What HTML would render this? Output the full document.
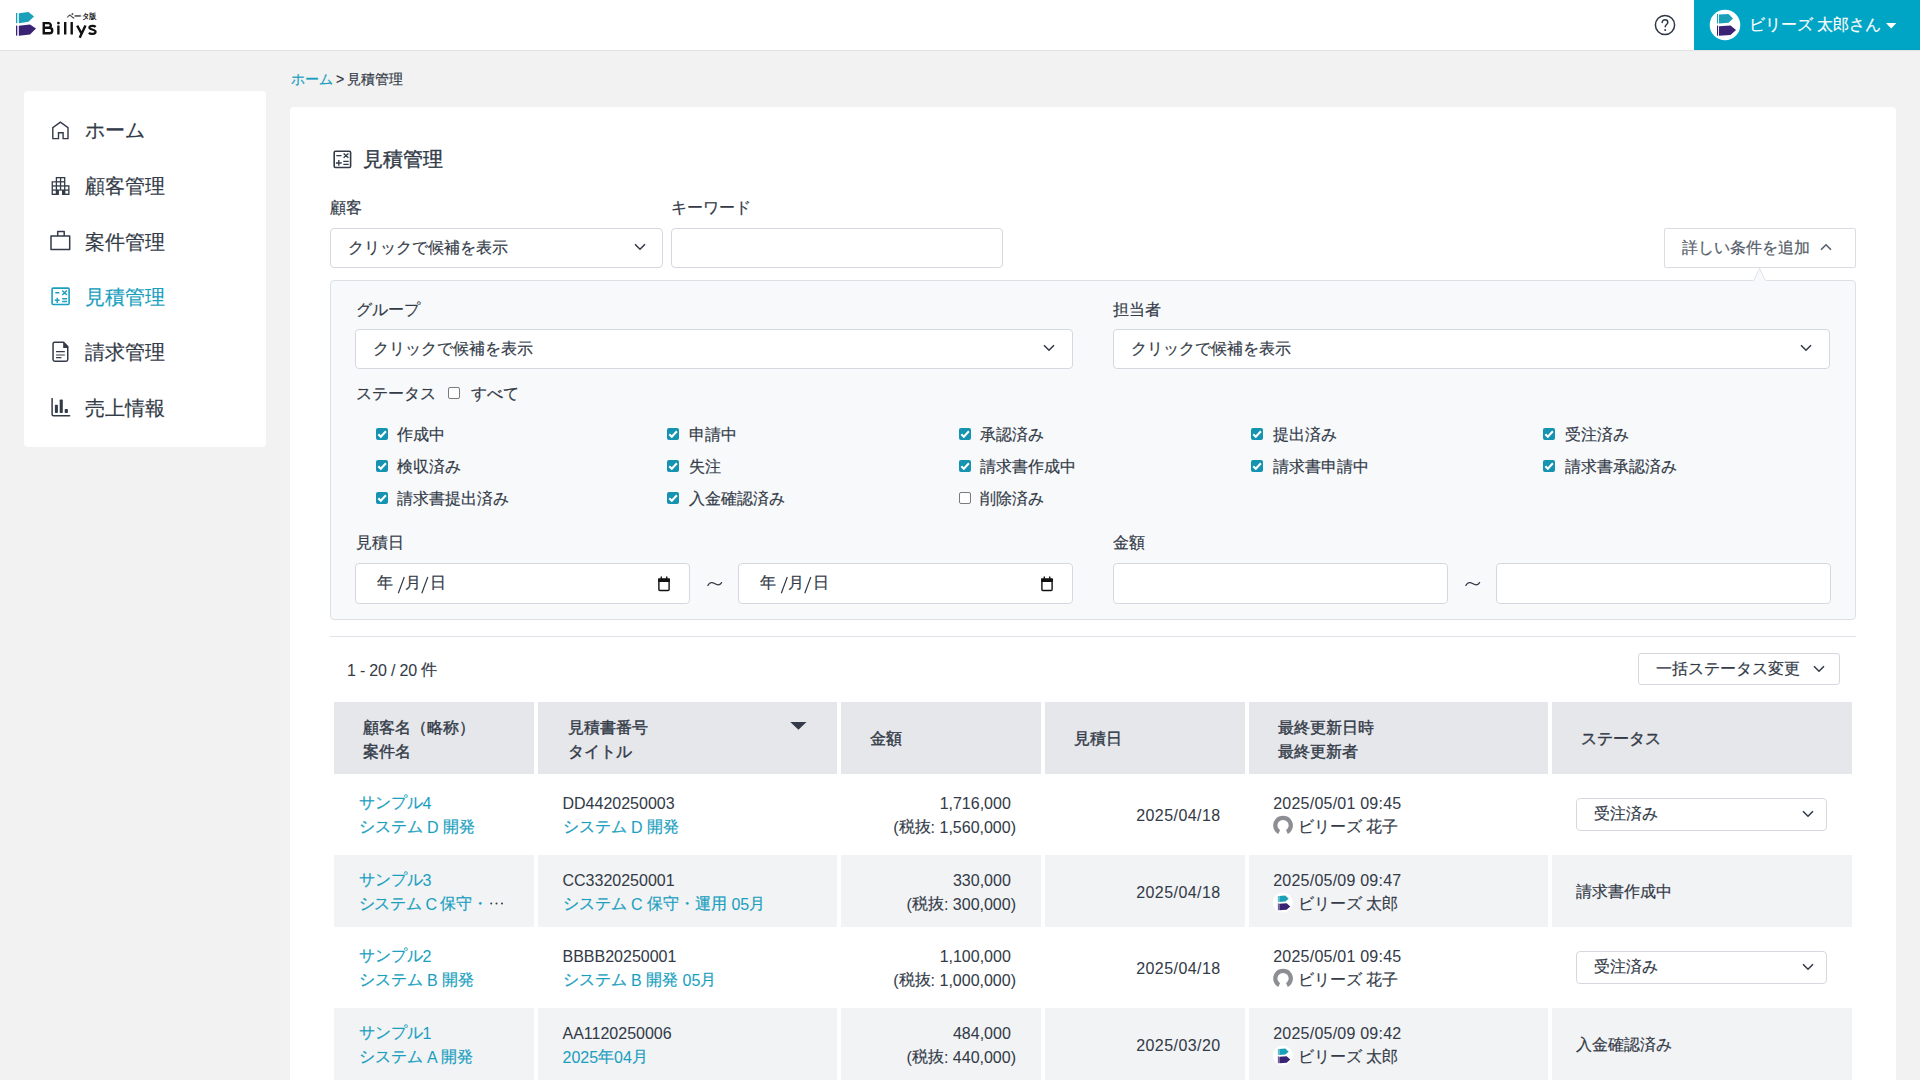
<!DOCTYPE html>
<html lang="ja">
<head>
<meta charset="utf-8">
<style>
*{box-sizing:border-box;margin:0;padding:0}
html,body{width:1920px;height:1080px;overflow:hidden}
body{-webkit-text-stroke:0.2px currentColor;background:#F2F2F2;font-family:"Liberation Sans",sans-serif;color:#333B48;position:relative;font-size:16px}
.abs{position:absolute}
#hdr{position:absolute;left:0;top:0;width:1920px;height:51px;background:#fff;border-bottom:1px solid #E2E2E2}
#user{position:absolute;left:1694px;top:0;width:226px;height:50px;background:#00A5C5}
#side{position:absolute;left:24px;top:91px;width:242px;height:356px;background:#fff;border-radius:4px}
.nav{position:absolute;left:61px;font-size:20px;line-height:28px;color:#333B48;white-space:nowrap}
.nav svg{position:absolute}
#main{position:absolute;left:290px;top:107px;width:1606px;height:1000px;background:#fff;border-radius:4px}
.lbl{position:absolute;font-size:16px;line-height:24px;white-space:nowrap}
.box{position:absolute;background:#fff;border:1px solid #D5D9DF;border-radius:4px}
.ph{position:absolute;left:17px;top:0;line-height:38px;font-size:16px;white-space:nowrap;color:#333B48}
.chev{position:absolute}
#panel{position:absolute;left:330px;top:280px;width:1526px;height:340px;background:#F8F9FB;border:1px solid #DDE1E6;border-radius:4px}
.cb{position:absolute;width:12px;height:12px;border-radius:2px;background:#1593B0}
.cb svg{position:absolute;left:0;top:0}
.cbu{position:absolute;width:12px;height:12px;border-radius:2px;border:1.3px solid #7A7A7A;background:#fff}
.cbt{position:absolute;font-size:16px;line-height:24px;white-space:nowrap}
table{position:absolute;left:330px;top:698px;border-collapse:separate;border-spacing:4px}
th{background:#E8E9ED;height:72px;text-align:left;font-weight:bold;font-size:16px;line-height:24px;padding:0 0 0 28px;vertical-align:middle;white-space:nowrap}
td{height:72.67px;font-size:16px;line-height:24px;padding:0 0 0 24px;vertical-align:middle;white-space:nowrap}
tr.g td{background:#F2F3F5}
.lk{color:#1A9FBF}
.n{position:relative;top:0.9px;-webkit-text-stroke-width:0.05px}
.cell{position:absolute;overflow:hidden}
.tx{position:absolute;font-size:16px;line-height:24px;white-space:nowrap}
.th{-webkit-text-stroke:0.4px #333B48}
</style>
</head>
<body>
<div id="hdr">
<svg class="abs" style="left:0;top:0" width="110" height="50" viewBox="0 0 110 50">
<rect x="16" y="13" width="1.3" height="10.2" fill="#1BA0BA"/>
<path d="M18.8 13.2 L28.5 12 L34 16.6 L28.5 21.8 L18.8 23.2 Z" fill="#1BA0BA"/>
<rect x="16" y="25.6" width="1.3" height="10" fill="#3A2374"/>
<path d="M18.8 25.8 L30 24.5 L36 28.6 L30 34.4 L18.8 35.7 Z" fill="#3A2374"/>
<g fill="none" stroke="#111" stroke-width="2.4" style="-webkit-text-stroke:0">
<path d="M43.75 21.9 V34.4 M43.75 23.1 H48.5 A2.3 2.3 0 0 1 48.5 27.7 H43.75 M48.5 27.7 H49.5 A2.75 2.75 0 0 1 49.5 33.2 H43.75"/>
<path d="M58.4 25.6 V34.4 M65.2 21.9 V34.4 M71.7 21.9 V34.4"/>
<path d="M77.2 25.6 L81.7 33.9 M85.5 25.6 L79.7 37.8"/>
<path d="M95.6 27 C94.6 25.7 89.6 25.3 89.4 27.6 C89.2 29.9 95.6 29.2 95.6 31.8 C95.6 34.5 90.1 34.3 88.9 32.8" stroke-width="2.2"/>
</g>
<circle cx="58.4" cy="23.1" r="1.4" fill="#111"/>
<text x="67" y="18.8" font-weight="bold" font-size="8" textLength="29.5" lengthAdjust="spacingAndGlyphs" fill="#222">ベータ版</text>
</svg>
<svg class="abs" style="left:1653px;top:13px" width="24" height="24" viewBox="0 0 24 24">
<circle cx="12" cy="12" r="9.6" fill="none" stroke="#2F3747" stroke-width="1.5"/>
<path d="M9.2 9.6 C9.2 7.9 10.4 6.8 12 6.8 C13.6 6.8 14.8 7.9 14.8 9.4 C14.8 11.4 12.2 11.6 12.2 13.8" fill="none" stroke="#2F3747" stroke-width="1.5" stroke-linecap="round"/>
<circle cx="12.2" cy="16.9" r="1" fill="#2F3747"/>
</svg>
</div>
<div id="user">
<svg class="abs" style="left:15px;top:9px" width="32" height="32" viewBox="0 0 32 32">
<circle cx="16" cy="16" r="15.3" fill="#fff"/>
<rect x="8" y="5" width="1.1" height="9.5" fill="#1BA0BA"/>
<path d="M10 5.6 L19.5 4.9 L24 9.6 L19.5 13.8 L10 14.5 Z" fill="#1BA0BA"/>
<rect x="8" y="16.6" width="1.1" height="10" fill="#3A2374"/>
<path d="M10 17.2 L21.5 16.4 L27 21 L21.5 26 L10 26.8 Z" fill="#3A2374"/>
</svg>
<div class="abs" style="left:55px;top:13px;font-size:16px;line-height:24px;color:#fff;white-space:nowrap">ビリーズ 太郎さん</div>
<svg class="abs" style="left:192px;top:22.7px" width="11" height="6" viewBox="0 0 11 6"><path d="M0 0 L10.4 0 L5.2 5.4 Z" fill="#fff"/></svg>
</div>
<div id="side">
<svg class="abs" style="left:27px;top:30px" width="20" height="20" viewBox="0 0 20 20"><path d="M1.8 17.6 V6.6 L9.4 1.2 L17 6.6 V17.6 H12.1 V11.7 H7.5 V17.6 Z" fill="none" stroke="#333B48" stroke-width="1.4" stroke-linejoin="miter"/></svg>
<div class="nav" style="top:24.5px">ホーム</div>
<svg class="abs" style="left:24px;top:81px" width="26" height="28" viewBox="0 0 26 28"><path d="M7.75 5 H17.35 V13.3 H21.5 V22.9 H3.6 V9.15 H7.75 Z" fill="#333B48"/><rect x="9.05" y="6.30" width="2.85" height="2.85" fill="#fff"/><rect x="13.20" y="6.30" width="2.85" height="2.85" fill="#fff"/><rect x="4.90" y="10.45" width="2.85" height="2.85" fill="#fff"/><rect x="9.05" y="10.45" width="2.85" height="2.85" fill="#fff"/><rect x="13.20" y="10.45" width="2.85" height="2.85" fill="#fff"/><rect x="4.90" y="14.60" width="2.85" height="2.85" fill="#fff"/><rect x="9.05" y="14.60" width="2.85" height="2.85" fill="#fff"/><rect x="13.20" y="14.60" width="2.85" height="2.85" fill="#fff"/><rect x="17.35" y="14.60" width="2.85" height="2.85" fill="#fff"/><rect x="4.90" y="18.75" width="2.85" height="2.85" fill="#fff"/><rect x="17.35" y="18.75" width="2.85" height="2.85" fill="#fff"/><rect x="10.9" y="18.65" width="3.1" height="4.3" fill="#fff"/></svg>
<div class="nav" style="top:81px">顧客管理</div>
<svg class="abs" style="left:26px;top:139px" width="22" height="22" viewBox="0 0 22 22"><path d="M1 6 H19.7 V19.6 H1 Z M7.7 6 V1.5 H14.2 V6" fill="none" stroke="#333B48" stroke-width="1.5" stroke-linejoin="round"/></svg>
<div class="nav" style="top:137px">案件管理</div>
<svg class="abs" style="left:27px;top:196px" width="20" height="20" viewBox="0 0 20 20"><rect x="1.1" y="1.1" width="17" height="16.4" rx="1" fill="none" stroke="#1A9FBF" stroke-width="1.6"/><path d="M4.3 5.7 H8.4 M11.2 3.4 L15.9 8 M15.9 3.4 L11.2 8 M3.8 13.3 H8.6 M6.2 10.8 V15.9 M11.2 11.7 H16 M11.2 14.5 H16" stroke="#1A9FBF" stroke-width="1.4"/></svg>
<div class="nav" style="top:192px;color:#1A9FBF">見積管理</div>
<svg class="abs" style="left:27px;top:250px" width="20" height="22" viewBox="0 0 20 22"><path d="M3.5 1.35 H12.6 L16.75 5.6 V18.6 Q16.75 20.25 15.1 20.25 H3.7 Q2.05 20.25 2.05 18.6 V3 Q2.05 1.35 3.5 1.35 Z" fill="none" stroke="#333B48" stroke-width="1.5" stroke-linejoin="round"/><path d="M12.2 1.2 L17.2 6 V7 H12.2 Z" fill="#333B48"/><path d="M5.5 10.7 H13.4 M5.5 14 H13.4 M5.5 16.7 H10" stroke="#333B48" stroke-width="1.2" stroke-linecap="round"/></svg>
<div class="nav" style="top:247px">請求管理</div>
<svg class="abs" style="left:27px;top:307px" width="20" height="20" viewBox="0 0 20 20"><path d="M1.1 0.6 V16.3 Q1.1 17.8 2.6 17.8 H18.6" fill="none" stroke="#333B48" stroke-width="1.5" stroke-linecap="round"/><rect x="3.9" y="6.8" width="3" height="8.2" rx="0.8" fill="#333B48"/><rect x="8.7" y="1.4" width="3.1" height="13.6" rx="0.8" fill="#333B48"/><rect x="13.7" y="11" width="3.2" height="4" rx="0.8" fill="#333B48"/></svg>
<div class="nav" style="top:303px">売上情報</div>
</div>
</div>
<div class="abs" style="left:291px;top:69px;font-size:14px;line-height:20px;white-space:nowrap;word-spacing:-1px"><span class="lk">ホーム</span> &gt; 見積管理</div>
<div id="main"></div>
<svg class="abs" style="left:332px;top:150px" width="22" height="20" viewBox="0 0 22 20"><rect x="2.2" y="1.3" width="16.4" height="16.2" rx="1.2" fill="none" stroke="#333B48" stroke-width="1.6"/><path d="M4.3 5.6 H9.5 M11.6 3.4 L16.4 7.8 M16.4 3.4 L11.6 7.8 M3.9 13 H9.7 M6.8 10.1 V15.8 M11.3 11.4 H16.7 M11.3 14.4 H16.7" stroke="#333B48" stroke-width="1.35"/></svg>
<div class="abs" style="left:363px;top:145px;font-size:20px;line-height:28px;white-space:nowrap;-webkit-text-stroke:0.4px #333B48">見積管理</div>
<div class="lbl" style="left:330px;top:196px">顧客</div>
<div class="lbl" style="left:671px;top:196px">キーワード</div>
<div class="box" style="left:330px;top:228px;width:333px;height:40px"><div class="ph">クリックで候補を表示</div><svg class="chev" style="left:303px;top:14px" width="12" height="8" viewBox="0 0 12 8"><path d="M1 1.2 L6 6.2 L11 1.2" fill="none" stroke="#333B48" stroke-width="1.6"/></svg></div>
<div class="box" style="left:671px;top:228px;width:332px;height:40px"></div>
<div class="box" style="left:1664px;top:228px;width:192px;height:40px;border-radius:2px;border-color:#D9DDE2"><div class="ph" style="left:17px;color:#555D69">詳しい条件を追加</div><svg class="chev" style="left:155px;top:14px" width="12" height="8" viewBox="0 0 12 8"><path d="M1 6.8 L6 1.8 L11 6.8" fill="none" stroke="#555D69" stroke-width="1.6"/></svg></div>
<div id="panel">
<div class="lbl" style="left:25px;top:17px">グループ</div>
<div class="box" style="left:24px;top:48px;width:718px;height:40px"><div class="ph">クリックで候補を表示</div><svg class="chev" style="left:687px;top:14px" width="12" height="8" viewBox="0 0 12 8"><path d="M1 1.2 L6 6.2 L11 1.2" fill="none" stroke="#333B48" stroke-width="1.6"/></svg></div>
<div class="lbl" style="left:782px;top:17px">担当者</div>
<div class="box" style="left:782px;top:48px;width:717px;height:40px"><div class="ph">クリックで候補を表示</div><svg class="chev" style="left:686px;top:14px" width="12" height="8" viewBox="0 0 12 8"><path d="M1 1.2 L6 6.2 L11 1.2" fill="none" stroke="#333B48" stroke-width="1.6"/></svg></div>
<div class="lbl" style="left:25px;top:101px">ステータス</div>
<div class="cbu" style="left:117px;top:106px"></div>
<div class="lbl" style="left:140px;top:101px">すべて</div>
<div class="cb" style="left:44.5px;top:146.5px"><svg width="12" height="12" viewBox="0 0 12 12"><path d="M2.3 6.3 L4.8 8.7 L9.9 3.2" fill="none" stroke="#fff" stroke-width="2.1"/></svg></div>
<div class="cbt" style="left:66.0px;top:142.0px">作成中</div>
<div class="cb" style="left:336.0px;top:146.5px"><svg width="12" height="12" viewBox="0 0 12 12"><path d="M2.3 6.3 L4.8 8.7 L9.9 3.2" fill="none" stroke="#fff" stroke-width="2.1"/></svg></div>
<div class="cbt" style="left:357.5px;top:142.0px">申請中</div>
<div class="cb" style="left:627.75px;top:146.5px"><svg width="12" height="12" viewBox="0 0 12 12"><path d="M2.3 6.3 L4.8 8.7 L9.9 3.2" fill="none" stroke="#fff" stroke-width="2.1"/></svg></div>
<div class="cbt" style="left:649.25px;top:142.0px">承認済み</div>
<div class="cb" style="left:920.25px;top:146.5px"><svg width="12" height="12" viewBox="0 0 12 12"><path d="M2.3 6.3 L4.8 8.7 L9.9 3.2" fill="none" stroke="#fff" stroke-width="2.1"/></svg></div>
<div class="cbt" style="left:941.75px;top:142.0px">提出済み</div>
<div class="cb" style="left:1212.0px;top:146.5px"><svg width="12" height="12" viewBox="0 0 12 12"><path d="M2.3 6.3 L4.8 8.7 L9.9 3.2" fill="none" stroke="#fff" stroke-width="2.1"/></svg></div>
<div class="cbt" style="left:1233.5px;top:142.0px">受注済み</div>
<div class="cb" style="left:44.5px;top:178.5px"><svg width="12" height="12" viewBox="0 0 12 12"><path d="M2.3 6.3 L4.8 8.7 L9.9 3.2" fill="none" stroke="#fff" stroke-width="2.1"/></svg></div>
<div class="cbt" style="left:66.0px;top:174.0px">検収済み</div>
<div class="cb" style="left:336.0px;top:178.5px"><svg width="12" height="12" viewBox="0 0 12 12"><path d="M2.3 6.3 L4.8 8.7 L9.9 3.2" fill="none" stroke="#fff" stroke-width="2.1"/></svg></div>
<div class="cbt" style="left:357.5px;top:174.0px">失注</div>
<div class="cb" style="left:627.75px;top:178.5px"><svg width="12" height="12" viewBox="0 0 12 12"><path d="M2.3 6.3 L4.8 8.7 L9.9 3.2" fill="none" stroke="#fff" stroke-width="2.1"/></svg></div>
<div class="cbt" style="left:649.25px;top:174.0px">請求書作成中</div>
<div class="cb" style="left:920.25px;top:178.5px"><svg width="12" height="12" viewBox="0 0 12 12"><path d="M2.3 6.3 L4.8 8.7 L9.9 3.2" fill="none" stroke="#fff" stroke-width="2.1"/></svg></div>
<div class="cbt" style="left:941.75px;top:174.0px">請求書申請中</div>
<div class="cb" style="left:1212.0px;top:178.5px"><svg width="12" height="12" viewBox="0 0 12 12"><path d="M2.3 6.3 L4.8 8.7 L9.9 3.2" fill="none" stroke="#fff" stroke-width="2.1"/></svg></div>
<div class="cbt" style="left:1233.5px;top:174.0px">請求書承認済み</div>
<div class="cb" style="left:44.5px;top:210.5px"><svg width="12" height="12" viewBox="0 0 12 12"><path d="M2.3 6.3 L4.8 8.7 L9.9 3.2" fill="none" stroke="#fff" stroke-width="2.1"/></svg></div>
<div class="cbt" style="left:66.0px;top:206.0px">請求書提出済み</div>
<div class="cb" style="left:336.0px;top:210.5px"><svg width="12" height="12" viewBox="0 0 12 12"><path d="M2.3 6.3 L4.8 8.7 L9.9 3.2" fill="none" stroke="#fff" stroke-width="2.1"/></svg></div>
<div class="cbt" style="left:357.5px;top:206.0px">入金確認済み</div>
<div class="cbu" style="left:627.75px;top:210.5px"></div>
<div class="cbt" style="left:649.25px;top:206.0px">削除済み</div>
<div class="lbl" style="left:25px;top:250px">見積日</div>
<div class="box" style="left:24px;top:282px;width:335px;height:40.8px"><div class="ph" style="left:21px">年</div><div class="ph" style="left:49px">月</div><div class="ph" style="left:74px">日</div><svg class="chev" style="left:40px;top:12px" width="34" height="18" viewBox="0 0 34 18"><path d="M8.3 1 L2.3 17.2 M31.8 1 L25.8 17.2" stroke="#333B48" stroke-width="1.2"/></svg><svg class="chev" style="left:300.5px;top:11.5px" width="14" height="16" viewBox="0 0 14 16"><path d="M1.9 3.2 H12.1 V13.4 Q12.1 14.5 11 14.5 H3 Q1.9 14.5 1.9 13.4 Z" fill="none" stroke="#111" stroke-width="1.4"/><rect x="1.2" y="2.5" width="11.6" height="3.6" rx="0.6" fill="#111"/><rect x="3.6" y="0.5" width="1.4" height="2.4" fill="#111"/><rect x="9" y="0.5" width="1.4" height="2.4" fill="#111"/></svg></div>
<svg class="abs" style="left:375.5px;top:300px" width="16" height="6" viewBox="0 0 16 6"><path d="M0.9 4.4 C2.8 1.2 5.2 1 7.6 2.6 C10 4.2 12.6 4.6 14.6 1.6" fill="none" stroke="#333B48" stroke-width="1.25" stroke-linecap="round"/></svg>
<div class="box" style="left:407px;top:282px;width:335px;height:40.8px"><div class="ph" style="left:21px">年</div><div class="ph" style="left:49px">月</div><div class="ph" style="left:74px">日</div><svg class="chev" style="left:40px;top:12px" width="34" height="18" viewBox="0 0 34 18"><path d="M8.3 1 L2.3 17.2 M31.8 1 L25.8 17.2" stroke="#333B48" stroke-width="1.2"/></svg><svg class="chev" style="left:300.5px;top:11.5px" width="14" height="16" viewBox="0 0 14 16"><path d="M1.9 3.2 H12.1 V13.4 Q12.1 14.5 11 14.5 H3 Q1.9 14.5 1.9 13.4 Z" fill="none" stroke="#111" stroke-width="1.4"/><rect x="1.2" y="2.5" width="11.6" height="3.6" rx="0.6" fill="#111"/><rect x="3.6" y="0.5" width="1.4" height="2.4" fill="#111"/><rect x="9" y="0.5" width="1.4" height="2.4" fill="#111"/></svg></div>
<div class="lbl" style="left:782px;top:250px">金額</div>
<div class="box" style="left:782px;top:282px;width:335px;height:40.8px"></div>
<svg class="abs" style="left:1133.5px;top:300px" width="16" height="6" viewBox="0 0 16 6"><path d="M0.9 4.4 C2.8 1.2 5.2 1 7.6 2.6 C10 4.2 12.6 4.6 14.6 1.6" fill="none" stroke="#333B48" stroke-width="1.25" stroke-linecap="round"/></svg>
<div class="box" style="left:1165px;top:282px;width:335px;height:40.8px"></div>
</div>
<div class="abs" style="left:1753px;top:268px;width:14px;height:14px;">
<svg width="14" height="14" viewBox="0 0 14 14"><path d="M0.4 13.5 L6.6 0.5 L12.8 13.5" fill="#F8F9FB" stroke="#DDE1E6" stroke-width="1"/><rect x="0" y="12.6" width="14" height="2" fill="#F8F9FB"/></svg>
</div>
<div class="abs" style="left:330px;top:636px;width:1526px;height:1px;background:#DFE2E6"></div>
<div class="lbl" style="left:347px;top:658px;letter-spacing:-0.2px"><span class="n">1 - 20 / 20</span> 件</div>
<div class="box" style="left:1638px;top:653px;width:202px;height:32px;border-radius:3px"><div class="ph" style="left:17px;line-height:30px">一括ステータス変更</div><svg class="chev" style="left:174px;top:11px" width="12" height="8" viewBox="0 0 12 8"><path d="M1 1.2 L6 6.2 L11 1.2" fill="none" stroke="#333B48" stroke-width="1.6"/></svg></div>

<div class="cell" style="left:334px;top:702px;width:200px;height:72px;background:#E6E7EB"><div class="tx th" style="left:29px;top:13.5px;">顧客名（略称）<br>案件名</div></div>
<div class="cell" style="left:538px;top:702px;width:299px;height:72px;background:#E6E7EB"><div class="tx th" style="left:30px;top:13.5px;">見積書番号<br>タイトル</div><svg class="abs" style="left:252px;top:20px" width="17" height="8" viewBox="0 0 17 8"><path d="M0.3 0 H16.5 L8.4 7.7 Z" fill="#333B48"/></svg></div>
<div class="cell" style="left:841px;top:702px;width:199.5px;height:72px;background:#E6E7EB"><div class="tx th" style="left:28.5px;top:24.5px;">金額</div></div>
<div class="cell" style="left:1045px;top:702px;width:200px;height:72px;background:#E6E7EB"><div class="tx th" style="left:28.5px;top:24.5px;">見積日</div></div>
<div class="cell" style="left:1249px;top:702px;width:298.5px;height:72px;background:#E6E7EB"><div class="tx th" style="left:29px;top:13.5px;">最終更新日時<br>最終更新者</div></div>
<div class="cell" style="left:1551.7px;top:702px;width:299.9px;height:72px;background:#E6E7EB"><div class="tx th" style="left:29px;top:24.5px;">ステータス</div></div>
<div class="cell" style="left:334px;top:778.0px;width:200px;height:72.5px;background:#fff"><div class="tx " style="left:24.5px;top:13.4px;"><span class="lk">サンプル<span class="n">4</span></span><br><span class="lk">システム <span class="n">D</span> 開発</span></div></div>
<div class="cell" style="left:538px;top:778.0px;width:299px;height:72.5px;background:#fff"><div class="tx " style="left:24.5px;top:13.4px;"><span class="n">DD4420250003</span><br><span class="lk">システム <span class="n">D</span> 開発</span></div></div>
<div class="cell" style="left:841px;top:778.0px;width:199.5px;height:72.5px;background:#fff"><div class="tx " style="right:29.7px;top:13.4px;"><span class="n">1,716,000</span></div><div class="tx " style="right:24.5px;top:37.4px;"><span class="n">(</span>税抜<span class="n">: 1,560,000)</span></div></div>
<div class="cell" style="left:1045px;top:778.0px;width:200px;height:72.5px;background:#fff"><div class="tx " style="right:24.3px;top:25.4px;letter-spacing:0.45px"><span class="n">2025/04/18</span></div></div>
<div class="cell" style="left:1249px;top:778.0px;width:298.5px;height:72.5px;background:#fff"><div class="tx " style="left:24.2px;top:13.4px;letter-spacing:0.23px"><span class="n">2025/05/01 09:45</span></div><svg class="abs" style="left:24px;top:37px" width="21" height="21" viewBox="0 0 21 21"><path d="M5.25 19.1 A9.85 9.85 0 1 1 14.85 19.1 L13.05 15.23 A5.6 5.6 0 1 0 7.05 15.23 Z" fill="#8C8E94"/></svg><div class="tx " style="left:49px;top:37.4px;">ビリーズ 花子</div></div>
<div class="cell" style="left:1551.7px;top:778.0px;width:299.9px;height:72.5px;background:#fff"><div class="box" style="left:24.6px;top:20.2px;width:250.6px;height:32.4px"><div class="ph" style="left:17px;line-height:30px">受注済み</div><svg class="chev" style="left:225px;top:11px" width="12" height="8" viewBox="0 0 12 8"><path d="M1 1.2 L6 6.2 L11 1.2" fill="none" stroke="#333B48" stroke-width="1.6"/></svg></div></div>
<div class="cell" style="left:334px;top:854.5px;width:200px;height:72.5px;background:#F2F3F5"><div class="tx " style="left:24.5px;top:13.4px;"><span class="lk">サンプル<span class="n">3</span></span><br><span class="lk" style="word-spacing:-1px;letter-spacing:-0.1px">システム <span class="n">C</span> 保守・</span></div><svg class="abs" style="left:155px;top:46.5px" width="16" height="5" viewBox="0 0 16 5"><circle cx="2.25" cy="2.6" r="1" fill="#333B48"/><circle cx="7.5" cy="2.6" r="1" fill="#333B48"/><circle cx="13" cy="2.6" r="1" fill="#333B48"/></svg></div>
<div class="cell" style="left:538px;top:854.5px;width:299px;height:72.5px;background:#F2F3F5"><div class="tx " style="left:24.5px;top:13.4px;"><span class="n">CC3320250001</span><br><span class="lk">システム <span class="n">C</span> 保守・運用 <span class="n">05</span>月</span></div></div>
<div class="cell" style="left:841px;top:854.5px;width:199.5px;height:72.5px;background:#F2F3F5"><div class="tx " style="right:29.7px;top:13.4px;"><span class="n">330,000</span></div><div class="tx " style="right:24.5px;top:37.4px;"><span class="n">(</span>税抜<span class="n">: 300,000)</span></div></div>
<div class="cell" style="left:1045px;top:854.5px;width:200px;height:72.5px;background:#F2F3F5"><div class="tx " style="right:24.3px;top:25.4px;letter-spacing:0.45px"><span class="n">2025/04/18</span></div></div>
<div class="cell" style="left:1249px;top:854.5px;width:298.5px;height:72.5px;background:#F2F3F5"><div class="tx " style="left:24.2px;top:13.4px;letter-spacing:0.23px"><span class="n">2025/05/09 09:47</span></div><svg class="abs" style="left:23px;top:37px" width="22" height="22" viewBox="0 0 22 22"><circle cx="10.8" cy="10.6" r="10" fill="#fff"/><rect x="5.9" y="3.9" width="0.8" height="6" fill="#1BA0BA"/><path d="M7.3 4.1 L13.3 3.6 L16.7 6.7 L13.3 9.4 L7.3 9.9 Z" fill="#1BA0BA"/><rect x="5.9" y="11.4" width="0.8" height="6.8" fill="#3A2374"/><path d="M7.3 11.7 L14.6 11.2 L18.3 14.6 L14.6 17.8 L7.3 18.3 Z" fill="#3A2374"/></svg><div class="tx " style="left:49px;top:37.4px;">ビリーズ 太郎</div></div>
<div class="cell" style="left:1551.7px;top:854.5px;width:299.9px;height:72.5px;background:#F2F3F5"><div class="tx " style="left:24.8px;top:25.4px;">請求書作成中</div></div>
<div class="cell" style="left:334px;top:931.0px;width:200px;height:72.5px;background:#fff"><div class="tx " style="left:24.5px;top:13.4px;"><span class="lk">サンプル<span class="n">2</span></span><br><span class="lk">システム <span class="n">B</span> 開発</span></div></div>
<div class="cell" style="left:538px;top:931.0px;width:299px;height:72.5px;background:#fff"><div class="tx " style="left:24.5px;top:13.4px;"><span class="n">BBBB20250001</span><br><span class="lk">システム <span class="n">B</span> 開発 <span class="n">05</span>月</span></div></div>
<div class="cell" style="left:841px;top:931.0px;width:199.5px;height:72.5px;background:#fff"><div class="tx " style="right:29.7px;top:13.4px;"><span class="n">1,100,000</span></div><div class="tx " style="right:24.5px;top:37.4px;"><span class="n">(</span>税抜<span class="n">: 1,000,000)</span></div></div>
<div class="cell" style="left:1045px;top:931.0px;width:200px;height:72.5px;background:#fff"><div class="tx " style="right:24.3px;top:25.4px;letter-spacing:0.45px"><span class="n">2025/04/18</span></div></div>
<div class="cell" style="left:1249px;top:931.0px;width:298.5px;height:72.5px;background:#fff"><div class="tx " style="left:24.2px;top:13.4px;letter-spacing:0.23px"><span class="n">2025/05/01 09:45</span></div><svg class="abs" style="left:24px;top:37px" width="21" height="21" viewBox="0 0 21 21"><path d="M5.25 19.1 A9.85 9.85 0 1 1 14.85 19.1 L13.05 15.23 A5.6 5.6 0 1 0 7.05 15.23 Z" fill="#8C8E94"/></svg><div class="tx " style="left:49px;top:37.4px;">ビリーズ 花子</div></div>
<div class="cell" style="left:1551.7px;top:931.0px;width:299.9px;height:72.5px;background:#fff"><div class="box" style="left:24.6px;top:20.2px;width:250.6px;height:32.4px"><div class="ph" style="left:17px;line-height:30px">受注済み</div><svg class="chev" style="left:225px;top:11px" width="12" height="8" viewBox="0 0 12 8"><path d="M1 1.2 L6 6.2 L11 1.2" fill="none" stroke="#333B48" stroke-width="1.6"/></svg></div></div>
<div class="cell" style="left:334px;top:1007.5px;width:200px;height:72.5px;background:#F2F3F5"><div class="tx " style="left:24.5px;top:13.4px;"><span class="lk">サンプル<span class="n">1</span></span><br><span class="lk">システム <span class="n">A</span> 開発</span></div></div>
<div class="cell" style="left:538px;top:1007.5px;width:299px;height:72.5px;background:#F2F3F5"><div class="tx " style="left:24.5px;top:13.4px;"><span class="n">AA1120250006</span><br><span class="lk"><span class="n">2025</span>年<span class="n">04</span>月</span></div></div>
<div class="cell" style="left:841px;top:1007.5px;width:199.5px;height:72.5px;background:#F2F3F5"><div class="tx " style="right:29.7px;top:13.4px;"><span class="n">484,000</span></div><div class="tx " style="right:24.5px;top:37.4px;"><span class="n">(</span>税抜<span class="n">: 440,000)</span></div></div>
<div class="cell" style="left:1045px;top:1007.5px;width:200px;height:72.5px;background:#F2F3F5"><div class="tx " style="right:24.3px;top:25.4px;letter-spacing:0.45px"><span class="n">2025/03/20</span></div></div>
<div class="cell" style="left:1249px;top:1007.5px;width:298.5px;height:72.5px;background:#F2F3F5"><div class="tx " style="left:24.2px;top:13.4px;letter-spacing:0.23px"><span class="n">2025/05/09 09:42</span></div><svg class="abs" style="left:23px;top:37px" width="22" height="22" viewBox="0 0 22 22"><circle cx="10.8" cy="10.6" r="10" fill="#fff"/><rect x="5.9" y="3.9" width="0.8" height="6" fill="#1BA0BA"/><path d="M7.3 4.1 L13.3 3.6 L16.7 6.7 L13.3 9.4 L7.3 9.9 Z" fill="#1BA0BA"/><rect x="5.9" y="11.4" width="0.8" height="6.8" fill="#3A2374"/><path d="M7.3 11.7 L14.6 11.2 L18.3 14.6 L14.6 17.8 L7.3 18.3 Z" fill="#3A2374"/></svg><div class="tx " style="left:49px;top:37.4px;">ビリーズ 太郎</div></div>
<div class="cell" style="left:1551.7px;top:1007.5px;width:299.9px;height:72.5px;background:#F2F3F5"><div class="tx " style="left:24.8px;top:25.4px;">入金確認済み</div></div>
</body>
</html>
